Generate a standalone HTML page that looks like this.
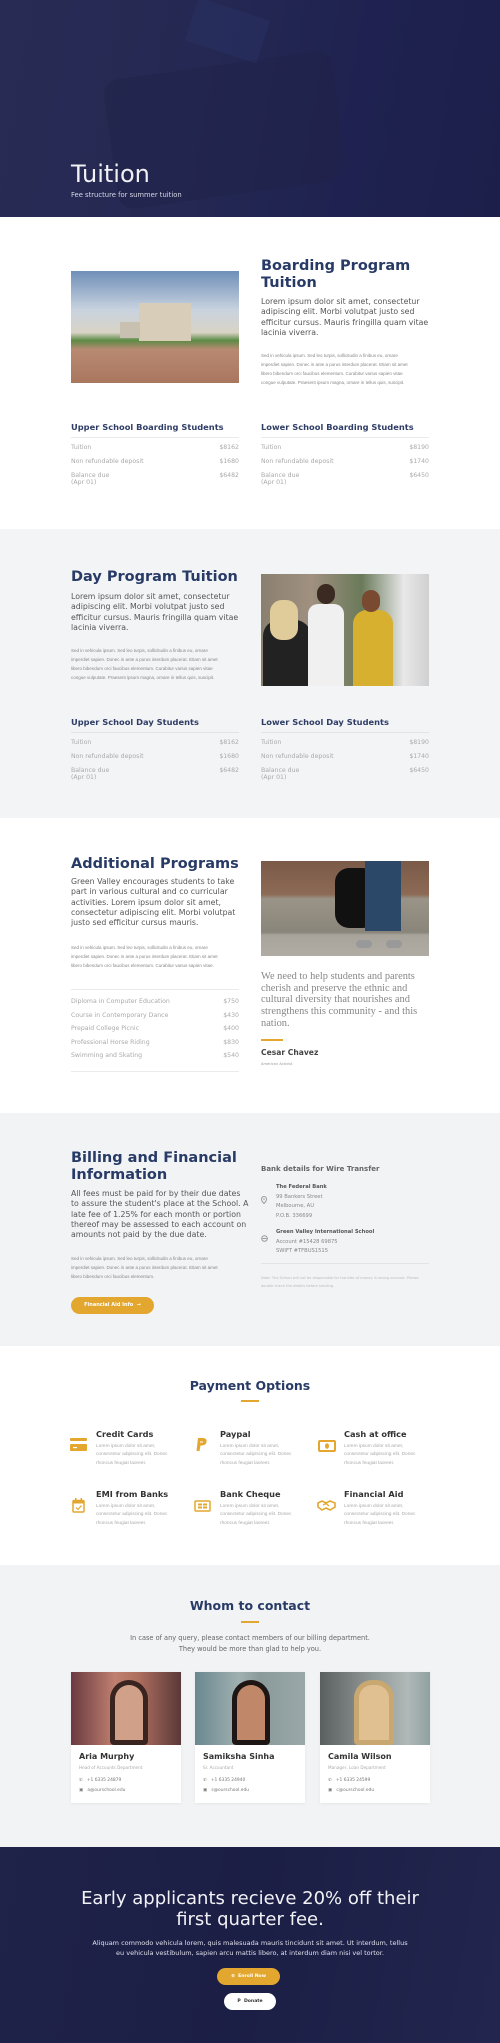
<!DOCTYPE html>
<html><head><meta charset="utf-8">
<style>
*{margin:0;padding:0;box-sizing:border-box}
body{width:500px;height:2043px;position:relative;font-family:"DejaVu Sans","Liberation Sans",sans-serif;background:#fff;overflow:hidden}
.a{position:absolute}
.h2{color:#283a66;font-weight:bold;font-size:14.5px;line-height:17px}
.lead{color:#555;font-size:7.8px;line-height:10.3px;white-space:nowrap}
.sm{color:#888;font-size:4.5px;line-height:9px;font-family:"Liberation Sans",sans-serif;white-space:nowrap}
.tt{color:#2f3d66;font-weight:bold;font-size:8.3px}
.row{color:#aaa;font-size:6.2px;display:flex;justify-content:space-between}
.hr{height:1px;background:#ebebeb}
.ptitle{color:#333;font-weight:bold;font-size:8.2px}
.pdesc{color:#aaa;font-size:4.8px;line-height:8.3px;font-family:"Liberation Sans",sans-serif}
.card{background:#fff;box-shadow:0 1px 3px rgba(0,0,0,.06)}
.cn{color:#333;font-weight:bold;font-size:8px}
.cr{color:#aaa;font-size:4.2px}
.cl{color:#777;font-size:4.4px}
</style></head><body>

<!-- hero -->
<div class="a" style="left:0;top:0;width:500px;height:217px;background:linear-gradient(100deg,#282c55 0%,#242852 40%,#1f2250 70%,#1c1f4a 100%)"></div>
<div class="a" style="left:110px;top:65px;width:230px;height:130px;background:#1f2248;border-radius:16px;opacity:.5;transform:rotate(-8deg)"></div>
<div class="a" style="left:190px;top:8px;width:75px;height:45px;background:#2a3468;transform:rotate(18deg);opacity:.4"></div>
<div class="a" style="left:71px;top:160px;color:#f0f0f5;font-size:24px;line-height:28px">Tuition</div>
<div class="a" style="left:71px;top:191px;color:#d8d9e6;font-size:6.8px">Fee structure for summer tuition</div>

<!-- section 1 -->
<div class="a" style="left:71px;top:271px;width:168px;height:112px;background:linear-gradient(180deg,#6f8fb8 0%,#c9d3df 35%,#d8d3c6 55%,#5c8a45 62%,#b98a72 70%,#a9765e 100%)"></div>
<div class="a" style="left:139px;top:303px;width:52px;height:38px;background:#d8cdb8"></div>
<div class="a" style="left:120px;top:322px;width:20px;height:16px;background:#c8c0b0"></div>
<div class="a h2" style="left:261px;top:258px">Boarding Program<br>Tuition</div>
<div class="a lead" style="left:261px;top:297px">Lorem ipsum dolor sit amet, consectetur<br>adipiscing elit. Morbi volutpat justo sed<br>efficitur cursus. Mauris fringilla quam vitae<br>lacinia viverra.</div>
<div class="a sm" style="left:261px;top:351px">Sed in vehicula ipsum. Sed leo turpis, sollicitudin a finibus eu, ornare<br>imperdiet sapien. Donec in ante a purus interdum placerat. Etiam sit amet<br>libero bibendum orci faucibus elementum. Curabitur varius sapien vitae<br>congue vulputate. Praesent ipsum magna, ornare in tellus quis, suscipit.</div>

<div class="a" style="left:71px;top:422px;width:168px"><div class="tt">Upper School Boarding Students</div><div class="hr" style="margin:5px 0 6px"></div>
<div class="row"><span>Tuition</span><span>$8162</span></div><div class="row" style="margin-top:7px"><span>Non refundable deposit</span><span>$1680</span></div><div class="row" style="margin-top:7px"><span>Balance due<br>(Apr 01)</span><span>$6482</span></div></div>
<div class="a" style="left:261px;top:422px;width:168px"><div class="tt">Lower School Boarding Students</div><div class="hr" style="margin:5px 0 6px"></div>
<div class="row"><span>Tuition</span><span>$8190</span></div><div class="row" style="margin-top:7px"><span>Non refundable deposit</span><span>$1740</span></div><div class="row" style="margin-top:7px"><span>Balance due<br>(Apr 01)</span><span>$6450</span></div></div>

<!-- section 2 -->
<div class="a" style="left:0;top:529px;width:500px;height:289px;background:#f3f4f6"></div>
<div class="a h2" style="left:71px;top:569px">Day Program Tuition</div>
<div class="a lead" style="left:71px;top:592px">Lorem ipsum dolor sit amet, consectetur<br>adipiscing elit. Morbi volutpat justo sed<br>efficitur cursus. Mauris fringilla quam vitae<br>lacinia viverra.</div>
<div class="a sm" style="left:71px;top:646px">Sed in vehicula ipsum. Sed leo turpis, sollicitudin a finibus eu, ornare<br>imperdiet sapien. Donec in ante a purus interdum placerat. Etiam sit amet<br>libero bibendum orci faucibus elementum. Curabitur varius sapien vitae<br>congue vulputate. Praesent ipsum magna, ornare in tellus quis, suscipit.</div>
<div class="a" style="left:261px;top:574px;width:168px;height:112px;background:linear-gradient(90deg,#8a8070 0%,#a09080 30%,#6a7a5a 60%,#e8e8e8 85%,#d0d0d0 100%)"></div>
<div class="a" style="left:263px;top:620px;width:48px;height:66px;background:#222;border-radius:16px 16px 0 0"></div>
<div class="a" style="left:270px;top:600px;width:28px;height:40px;background:#e0cc9a;border-radius:12px"></div>
<div class="a" style="left:308px;top:604px;width:36px;height:82px;background:#f0f0f0;border-radius:10px 10px 0 0"></div>
<div class="a" style="left:317px;top:584px;width:18px;height:20px;background:#3a2a22;border-radius:9px"></div>
<div class="a" style="left:353px;top:610px;width:40px;height:76px;background:#d8b030;border-radius:14px 14px 0 0"></div>
<div class="a" style="left:362px;top:590px;width:18px;height:22px;background:#7a4a30;border-radius:9px"></div>

<div class="a" style="left:71px;top:717px;width:168px"><div class="tt">Upper School Day Students</div><div class="hr" style="margin:5px 0 6px;background:#e2e3e6"></div>
<div class="row"><span>Tuition</span><span>$8162</span></div><div class="row" style="margin-top:7px"><span>Non refundable deposit</span><span>$1680</span></div><div class="row" style="margin-top:7px"><span>Balance due<br>(Apr 01)</span><span>$6482</span></div></div>
<div class="a" style="left:261px;top:717px;width:168px"><div class="tt">Lower School Day Students</div><div class="hr" style="margin:5px 0 6px;background:#e2e3e6"></div>
<div class="row"><span>Tuition</span><span>$8190</span></div><div class="row" style="margin-top:7px"><span>Non refundable deposit</span><span>$1740</span></div><div class="row" style="margin-top:7px"><span>Balance due<br>(Apr 01)</span><span>$6450</span></div></div>

<!-- section 3 -->
<div class="a h2" style="left:71px;top:856px">Additional Programs</div>
<div class="a lead" style="left:71px;top:877px">Green Valley encourages students to take<br>part in various cultural and co curricular<br>activities. Lorem ipsum dolor sit amet,<br>consectetur adipiscing elit. Morbi volutpat<br>justo sed efficitur cursus mauris.</div>
<div class="a sm" style="left:71px;top:943px">Sed in vehicula ipsum. Sed leo turpis, sollicitudin a finibus eu, ornare<br>imperdiet sapien. Donec in ante a purus interdum placerat. Etiam sit amet<br>libero bibendum orci faucibus elementum. Curabitur varius sapien vitae.</div>
<div class="a hr" style="left:71px;top:989px;width:168px"></div>
<div class="a" style="left:71px;top:998px;width:168px">
<div class="row"><span>Diploma in Computer Education</span><span>$750</span></div>
<div class="row" style="margin-top:6.5px"><span>Course in Contemporary Dance</span><span>$430</span></div>
<div class="row" style="margin-top:6.5px"><span>Prepaid College Picnic</span><span>$400</span></div>
<div class="row" style="margin-top:6.5px"><span>Professional Horse Riding</span><span>$830</span></div>
<div class="row" style="margin-top:6.5px"><span>Swimming and Skating</span><span>$540</span></div></div>
<div class="a hr" style="left:71px;top:1071px;width:168px"></div>
<div class="a" style="left:261px;top:861px;width:168px;height:95px;background:linear-gradient(180deg,#7a5a48 0%,#8c6a55 35%,#9a9488 40%,#8a857a 75%,#a8a49c 78%,#b0aca4 100%)"></div>
<div class="a" style="left:335px;top:868px;width:42px;height:60px;background:#111;border-radius:14px"></div>
<div class="a" style="left:365px;top:861px;width:36px;height:70px;background:#2c4868"></div>
<div class="a" style="left:356px;top:940px;width:16px;height:8px;background:#999;border-radius:4px"></div>
<div class="a" style="left:386px;top:940px;width:16px;height:8px;background:#999;border-radius:4px"></div>
<div class="a" style="left:261px;top:971px;color:#888;font-family:'Liberation Serif','DejaVu Serif',serif;font-size:10.4px;line-height:11.7px;white-space:nowrap">We need to help students and parents<br>cherish and preserve the ethnic and<br>cultural diversity that nourishes and<br>strengthens this community - and this<br>nation.</div>
<div class="a" style="left:261px;top:1039px;width:22px;height:2px;background:#e3a72f"></div>
<div class="a" style="left:261px;top:1048px;color:#444;font-weight:bold;font-size:7.6px">Cesar Chavez</div>
<div class="a" style="left:261px;top:1062px;color:#999;font-size:3.6px">American Activist</div>

<!-- section 4 -->
<div class="a" style="left:0;top:1113px;width:500px;height:233px;background:#f2f3f5"></div>
<div class="a h2" style="left:71px;top:1150px">Billing and Financial<br>Information</div>
<div class="a lead" style="left:71px;top:1189px">All fees must be paid for by their due dates<br>to assure the student's place at the School. A<br>late fee of 1.25% for each month or portion<br>thereof may be assessed to each account on<br>amounts not paid by the due date.</div>
<div class="a sm" style="left:71px;top:1254px">Sed in vehicula ipsum. Sed leo turpis, sollicitudin a finibus eu, ornare<br>imperdiet sapien. Donec in ante a purus interdum placerat. Etiam sit amet<br>libero bibendum orci faucibus elementum.</div>
<div class="a" style="left:71px;top:1297px;width:83px;height:17px;background:#e3a72f;border-radius:9px;color:#fff;font-weight:bold;font-size:5px;line-height:17px;text-align:center">Financial Aid Info &nbsp;→</div>
<div class="a" style="left:261px;top:1165px;color:#666;font-weight:bold;font-size:7px">Bank details for Wire Transfer</div>
<div class="a" style="left:276px;top:1183px;color:#555;font-size:5.2px;line-height:9.6px"><b>The Federal Bank</b><br><span style="color:#888">99 Bankers Street<br>Melbourne, AU<br>P.O.B. 336699</span></div>
<div class="a" style="left:276px;top:1228px;color:#555;font-size:5.2px;line-height:9.6px"><b>Green Valley International School</b><br><span style="color:#888">Account #15428 69875<br>SWIFT #TFBUS1515</span></div>
<svg class="a" style="left:261px;top:1196px" width="6" height="8" viewBox="0 0 6 8"><path d="M3 0.5A2.5 2.5 0 0 0 .5 3C.5 5 3 7.5 3 7.5S5.5 5 5.5 3A2.5 2.5 0 0 0 3 .5z" fill="none" stroke="#999" stroke-width="1"/><circle cx="3" cy="3" r=".8" fill="#999"/></svg>
<svg class="a" style="left:261px;top:1235px" width="7" height="7" viewBox="0 0 7 7"><circle cx="3.5" cy="3.5" r="2.8" fill="none" stroke="#999" stroke-width="1"/><rect x="1.5" y="3" width="4" height="1" fill="#999"/></svg>
<div class="a hr" style="left:261px;top:1263px;width:168px;background:#e2e3e6"></div>
<div class="a" style="left:261px;top:1275px;width:170px;color:#bbb;font-size:3.6px;line-height:7.5px">Note: The School will not be responsible for transfer of money in wrong account. Please double check the details before sending.</div>

<!-- payment -->
<div class="a" style="left:0;top:1378px;width:500px;text-align:center;color:#283a66;font-weight:bold;font-size:12.5px">Payment Options</div>
<div class="a" style="left:241px;top:1400px;width:18px;height:1.5px;background:#e3a72f"></div>

<svg class="a" style="left:70px;top:1438px" width="17" height="14" viewBox="0 0 17 14"><rect x="0" y="0" width="17" height="3" rx="1" fill="#e3a72f"/><rect x="0" y="6" width="17" height="7" rx="1" fill="#e3a72f"/><rect x="3" y="9" width="4" height="1.2" fill="#fff"/></svg>
<div class="a" style="left:96px;top:1429px;width:84px"><div class="ptitle">Credit Cards</div><div class="pdesc" style="margin-top:4px">Lorem ipsum dolor sit amet, consectetur adipiscing elit. Donec rhoncus feugiat laoreet.</div></div>
<svg class="a" style="left:196px;top:1438px" width="12" height="14" viewBox="0 0 12 14"><path d="M2 0H7C10 0 11 2 10.5 4C10 6.5 8 7.5 5.5 7.5H4.5L3.5 13H0.5Z" fill="#e3a72f"/><path d="M4 4H7" stroke="#fff" stroke-width="1"/></svg>
<div class="a" style="left:220px;top:1429px;width:84px"><div class="ptitle">Paypal</div><div class="pdesc" style="margin-top:4px">Lorem ipsum dolor sit amet, consectetur adipiscing elit. Donec rhoncus feugiat laoreet.</div></div>
<svg class="a" style="left:318px;top:1440px" width="18" height="12" viewBox="0 0 18 12"><rect x="1" y="1" width="16" height="10" rx="1" fill="none" stroke="#e3a72f" stroke-width="2"/><ellipse cx="9" cy="6" rx="2" ry="2.8" fill="#e3a72f"/></svg>
<div class="a" style="left:344px;top:1429px;width:84px"><div class="ptitle">Cash at office</div><div class="pdesc" style="margin-top:4px">Lorem ipsum dolor sit amet, consectetur adipiscing elit. Donec rhoncus feugiat laoreet.</div></div>

<svg class="a" style="left:72px;top:1498px" width="13" height="15" viewBox="0 0 13 15"><rect x="1" y="2.5" width="11" height="11.5" rx="1" fill="none" stroke="#e3a72f" stroke-width="1.5"/><rect x="1" y="2.5" width="11" height="3" fill="#e3a72f"/><rect x="3" y="0" width="1.5" height="3" fill="#e3a72f"/><rect x="8.5" y="0" width="1.5" height="3" fill="#e3a72f"/><path d="M4 9.5L6 11.5L9.5 7.5" fill="none" stroke="#e3a72f" stroke-width="1.2"/></svg>
<div class="a" style="left:96px;top:1489px;width:84px"><div class="ptitle">EMI from Banks</div><div class="pdesc" style="margin-top:4px">Lorem ipsum dolor sit amet, consectetur adipiscing elit. Donec rhoncus feugiat laoreet.</div></div>
<svg class="a" style="left:194px;top:1500px" width="17" height="12" viewBox="0 0 17 12"><rect x="1" y="1" width="15" height="10" rx="1" fill="none" stroke="#e3a72f" stroke-width="1.5"/><rect x="4" y="3.5" width="4" height="2" fill="#e3a72f"/><rect x="9" y="3.5" width="4" height="2" fill="#e3a72f"/><rect x="4" y="6.5" width="4" height="2" fill="#e3a72f"/><rect x="9" y="6.5" width="4" height="2" fill="#e3a72f"/></svg>
<div class="a" style="left:220px;top:1489px;width:84px"><div class="ptitle">Bank Cheque</div><div class="pdesc" style="margin-top:4px">Lorem ipsum dolor sit amet, consectetur adipiscing elit. Donec rhoncus feugiat laoreet.</div></div>
<svg class="a" style="left:317px;top:1500px" width="19" height="11" viewBox="0 0 19 11"><path d="M1 3L5 1L9 3L13 1L18 3V7L13 10L9 8L5 10L1 7Z" fill="none" stroke="#e3a72f" stroke-width="1.6"/><path d="M6 5L9 3.5L12 6" fill="none" stroke="#e3a72f" stroke-width="1.3"/></svg>
<div class="a" style="left:344px;top:1489px;width:84px"><div class="ptitle">Financial Aid</div><div class="pdesc" style="margin-top:4px">Lorem ipsum dolor sit amet, consectetur adipiscing elit. Donec rhoncus feugiat laoreet.</div></div>

<!-- contact -->
<div class="a" style="left:0;top:1565px;width:500px;height:282px;background:#f2f3f5"></div>
<div class="a" style="left:0;top:1598px;width:500px;text-align:center;color:#283a66;font-weight:bold;font-size:12.5px">Whom to contact</div>
<div class="a" style="left:241px;top:1621px;width:18px;height:1.5px;background:#e3a72f"></div>
<div class="a" style="left:0;top:1633px;width:500px;text-align:center;color:#666;font-size:6.6px;line-height:10.5px">In case of any query, please contact members of our billing department.<br>They would be more than glad to help you.</div>

<div class="a card" style="left:71px;top:1672px;width:110px;height:131px"></div>
<div class="a" style="left:71px;top:1672px;width:110px;height:73px;background:linear-gradient(90deg,#6a3a40,#c08070 40%,#b07060 60%,#5a3838)"></div>
<div class="a" style="left:110px;top:1680px;width:38px;height:65px;background:#d0a088;border-radius:19px 19px 4px 4px;border:5px solid #3a2420"></div>
<div class="a" style="left:79px;top:1752px"><div class="cn">Aria Murphy</div><div class="cr" style="margin-top:4px">Head of Accounts Department</div><div class="cl" style="margin-top:8px">✆ &nbsp;&nbsp;+1 6335 24879</div><div class="cl" style="margin-top:5px">▣ &nbsp;&nbsp;a@ourschool.edu</div></div>

<div class="a card" style="left:195px;top:1672px;width:110px;height:131px"></div>
<div class="a" style="left:195px;top:1672px;width:110px;height:73px;background:linear-gradient(90deg,#6a8890,#a0b0b0 40%,#8a9a9a 60%,#9aa8a8)"></div>
<div class="a" style="left:232px;top:1680px;width:38px;height:65px;background:#c08868;border-radius:19px 19px 4px 4px;border:5px solid #1e1614"></div>
<div class="a" style="left:203px;top:1752px"><div class="cn">Samiksha Sinha</div><div class="cr" style="margin-top:4px">Sr. Accountant</div><div class="cl" style="margin-top:8px">✆ &nbsp;&nbsp;+1 6335 24940</div><div class="cl" style="margin-top:5px">▣ &nbsp;&nbsp;s@ourschool.edu</div></div>

<div class="a card" style="left:320px;top:1672px;width:110px;height:131px"></div>
<div class="a" style="left:320px;top:1672px;width:110px;height:73px;background:linear-gradient(90deg,#5a6060,#8a9090 40%,#b0b8b8 80%,#90a0a0)"></div>
<div class="a" style="left:354px;top:1680px;width:40px;height:65px;background:#e0c090;border-radius:18px 18px 4px 4px;border:5px solid #c8a870"></div>
<div class="a" style="left:328px;top:1752px"><div class="cn">Camila Wilson</div><div class="cr" style="margin-top:4px">Manager, Loan Department</div><div class="cl" style="margin-top:8px">✆ &nbsp;&nbsp;+1 6335 24599</div><div class="cl" style="margin-top:5px">▣ &nbsp;&nbsp;c@ourschool.edu</div></div>

<!-- CTA -->
<div class="a" style="left:0;top:1847px;width:500px;height:196px;background:linear-gradient(100deg,#1f2249,#1b1e45 50%,#22264e)"></div>
<div class="a" style="left:0;top:1888px;width:500px;text-align:center;color:#f2f2f6;font-size:18px;line-height:21px">Early applicants recieve 20% off their<br>first quarter fee.</div>
<div class="a" style="left:0;top:1938px;width:500px;text-align:center;color:#e0e0ea;font-size:6.5px;line-height:10.3px">Aliquam commodo vehicula lorem, quis malesuada mauris tincidunt sit amet. Ut interdum, tellus<br>eu vehicula vestibulum, sapien arcu mattis libero, at interdum diam nisi vel tortor.</div>
<div class="a" style="left:217px;top:1968px;width:63px;height:17px;background:#e3a72f;border-radius:9px;color:#fff;font-weight:bold;font-size:4.6px;line-height:17px;text-align:center">⊕ &nbsp;Enroll Now</div>
<div class="a" style="left:224px;top:1993px;width:52px;height:17px;background:#fff;border-radius:9px;color:#333;font-weight:bold;font-size:4.6px;line-height:17px;text-align:center">P &nbsp;Donate</div>
</body></html>
